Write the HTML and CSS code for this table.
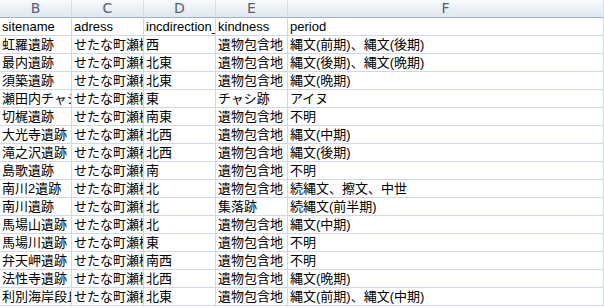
FILE: index.html
```html
<!DOCTYPE html>
<html lang="ja">
<head>
<meta charset="utf-8">
<link rel="stylesheet" href="styles.css">
</head>
<body>
<table class="sheet">
<colgroup><col class="c1"><col class="c2"><col class="c3"><col class="c4"><col class="c5"></colgroup>
<thead>
<tr><th>B</th><th>C</th><th>D</th><th>E</th><th>F</th></tr>
</thead>
<tbody>
<tr><td>sitename</td><td>adress</td><td>incdirection_</td><td>kindness</td><td>period</td></tr>
<tr><td>虹羅遺跡</td><td>せたな町瀬棚</td><td>西</td><td>遺物包含地</td><td>縄文(前期)、縄文(後期)</td></tr>
<tr><td>最内遺跡</td><td>せたな町瀬棚</td><td>北東</td><td>遺物包含地</td><td>縄文(後期)、縄文(晩期)</td></tr>
<tr><td>須築遺跡</td><td>せたな町瀬棚</td><td>北東</td><td>遺物包含地</td><td>縄文(晩期)</td></tr>
<tr><td>瀬田内チャシ</td><td>せたな町瀬棚</td><td>東</td><td>チャシ跡</td><td>アイヌ</td></tr>
<tr><td>切梶遺跡</td><td>せたな町瀬棚</td><td>南東</td><td>遺物包含地</td><td>不明</td></tr>
<tr><td>大光寺遺跡</td><td>せたな町瀬棚</td><td>北西</td><td>遺物包含地</td><td>縄文(中期)</td></tr>
<tr><td>滝之沢遺跡</td><td>せたな町瀬棚</td><td>北西</td><td>遺物包含地</td><td>縄文(後期)</td></tr>
<tr><td>島歌遺跡</td><td>せたな町瀬棚</td><td>南</td><td>遺物包含地</td><td>不明</td></tr>
<tr><td>南川2遺跡</td><td>せたな町瀬棚</td><td>北</td><td>遺物包含地</td><td>続縄文、擦文、中世</td></tr>
<tr><td>南川遺跡</td><td>せたな町瀬棚</td><td>北</td><td>集落跡</td><td>続縄文(前半期)</td></tr>
<tr><td>馬場山遺跡</td><td>せたな町瀬棚</td><td>北</td><td>遺物包含地</td><td>縄文(中期)</td></tr>
<tr><td>馬場川遺跡</td><td>せたな町瀬棚</td><td>東</td><td>遺物包含地</td><td>不明</td></tr>
<tr><td>弁天岬遺跡</td><td>せたな町瀬棚</td><td>南西</td><td>遺物包含地</td><td>不明</td></tr>
<tr><td>法性寺遺跡</td><td>せたな町瀬棚</td><td>北西</td><td>遺物包含地</td><td>縄文(晩期)</td></tr>
<tr><td>利別海岸段丘</td><td>せたな町瀬棚</td><td>北東</td><td>遺物包含地</td><td>縄文(前期)、縄文(中期)</td></tr>
</tbody>
</table>
</body>
</html>
```
FILE: styles.css
```css
html, body {
  margin: 0;
  padding: 0;
  background: #ffffff;
  overflow: hidden;
}
.sheet {
  border-collapse: separate;
  border-spacing: 0;
  table-layout: fixed;
  width: 604px;
  font-family: "Liberation Sans", "Noto Sans CJK JP", sans-serif;
  font-size: 13px;
  color: #000;
}
.c1, .c2, .c3, .c4 { width: 72px; }
.c5 { width: 316px; }
.sheet th {
  height: 17px;
  padding: 0;
  font-family: "DejaVu Sans", sans-serif;
  font-weight: normal;
  font-size: 14px;
  line-height: 17px;
  color: #556070;
  background: linear-gradient(#f8fafd, #dfe7f1);
  border-right: 1px solid #d3dce8;
  border-bottom: 1px solid #9db3cc;
  text-align: center;
}
.sheet td {
  height: 17px;
  padding: 0 0 0 2px;
  line-height: 17px;
  border-right: 1px solid #d0d7e5;
  border-bottom: 1px solid #d0d7e5;
  white-space: nowrap;
  overflow: hidden;
  text-overflow: clip;
}
```
